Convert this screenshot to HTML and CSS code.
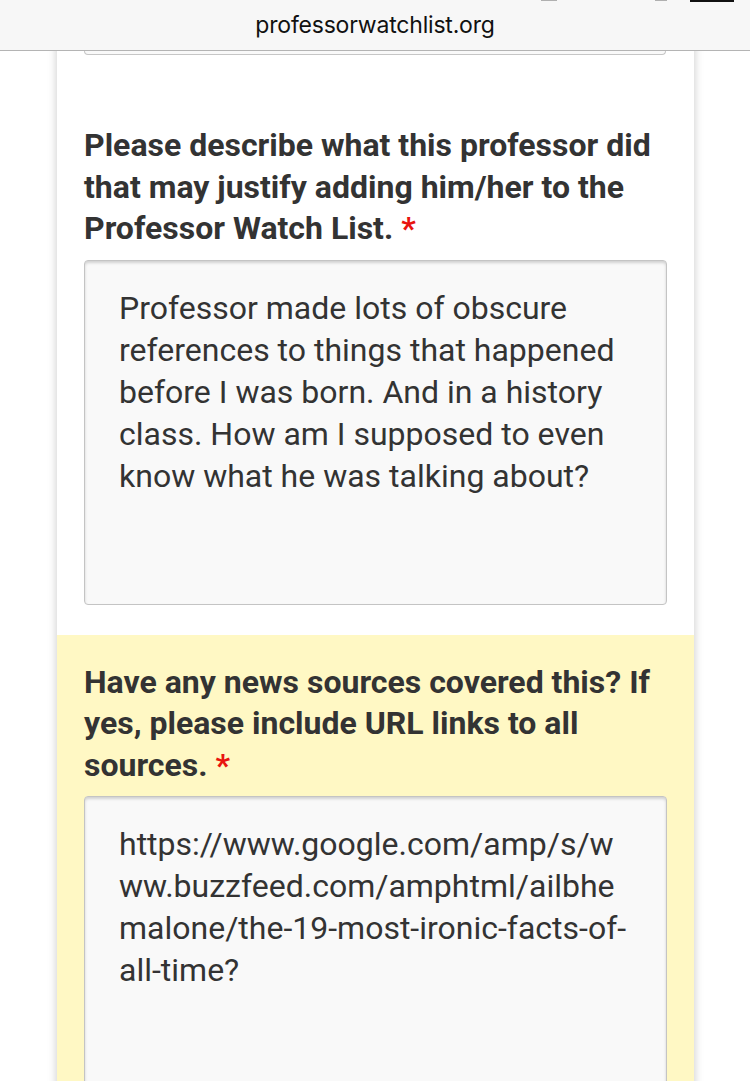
FILE: index.html
```html
<!DOCTYPE html>
<html lang="en">
<head>
<meta charset="utf-8">
<title>professorwatchlist.org</title>
<link rel="stylesheet" href="styles.css">
</head>
<body>
<header class="urlbar">
  <span class="status-mark mark-a"></span>
  <span class="status-mark mark-b"></span>
  <span class="battery"></span>
  <span class="url">professorwatchlist.org</span>
</header>
<main class="card">
  <div class="prev-field"></div>
  <section class="question">
    <h2 class="label">Please describe what this professor did<br>that may justify adding him/her to the<br>Professor Watch List. <span class="req">*</span></h2>
    <div class="field field-tall">Professor made lots of obscure<br>references to things that happened<br>before I was born. And in a history<br>class. How am I supposed to even<br>know what he was talking about?</div>
  </section>
  <section class="question highlight">
    <h2 class="label">Have any news sources covered this? If<br>yes, please include URL links to all<br>sources. <span class="req">*</span></h2>
    <div class="field field-open">https://www.google.com/amp/s/w<br>ww.buzzfeed.com/amphtml/ailbhe<br>malone/the-19-most-ironic-facts-of-<br>all-time?</div>
  </section>
</main>
</body>
</html>
```

FILE: styles.css
```css
* { box-sizing: border-box; }
html, body {
  margin: 0;
  padding: 0;
  background: #ffffff;
  overflow: hidden;
  height: 1081px;
}
body {
  font-family: Roboto, "Liberation Sans", sans-serif;
  color: #333333;
}
.urlbar {
  position: fixed;
  top: 0;
  left: 0;
  right: 0;
  height: 51px;
  background: #f7f7f7;
  border-bottom: 1px solid #b4b4b4;
  display: flex;
  align-items: center;
  justify-content: center;
  z-index: 5;
}
.url {
  font-family: Inter, Roboto, "Liberation Sans", sans-serif;
  font-size: 23px;
  color: #111111;
  letter-spacing: -0.2px;
}
.status-mark {
  position: absolute;
  top: 0;
  height: 1px;
  background: #b0b0b0;
}
.mark-a { left: 541px; width: 16px; }
.mark-b { left: 655px; width: 12px; }
.battery {
  position: absolute;
  top: 0;
  left: 690px;
  width: 44px;
  height: 2px;
  background: #111111;
}
.card {
  width: 637px;
  margin: 0 0 0 57px;
  padding-top: 51px;
  min-height: 1081px;
  background: #ffffff;
  box-shadow: 0 0 9px rgba(0, 0, 0, 0.22);
}
.prev-field {
  margin: 0 28px 0 27px;
  height: 4px;
  background: #f9f9f9;
  border: 1px solid #c6c6c6;
  border-top: none;
  border-radius: 0 0 4px 4px;
}
.question {
  padding: 0 27px 30px 27px;
}
.prev-field + .question {
  padding-top: 70px;
}
.highlight {
  background: #fff8c4;
  padding-top: 27px;
}
.label {
  margin: 0 0 10px 0;
  font-size: 32px;
  line-height: 41.5px;
  font-weight: 700;
  color: #333333;
  white-space: nowrap;
}
.req {
  color: #e8140f;
}
.field {
  background: #f9f9f9;
  border: 1px solid #c4c4c4;
  border-radius: 4px;
  box-shadow: inset 0 2px 3px rgba(0, 0, 0, 0.16);
  padding: 26px 20px 0 34px;
  font-size: 32px;
  line-height: 42px;
  color: #333333;
  white-space: nowrap;
}
.field-tall {
  height: 345px;
}
.field-open {
  height: 400px;
}
```
